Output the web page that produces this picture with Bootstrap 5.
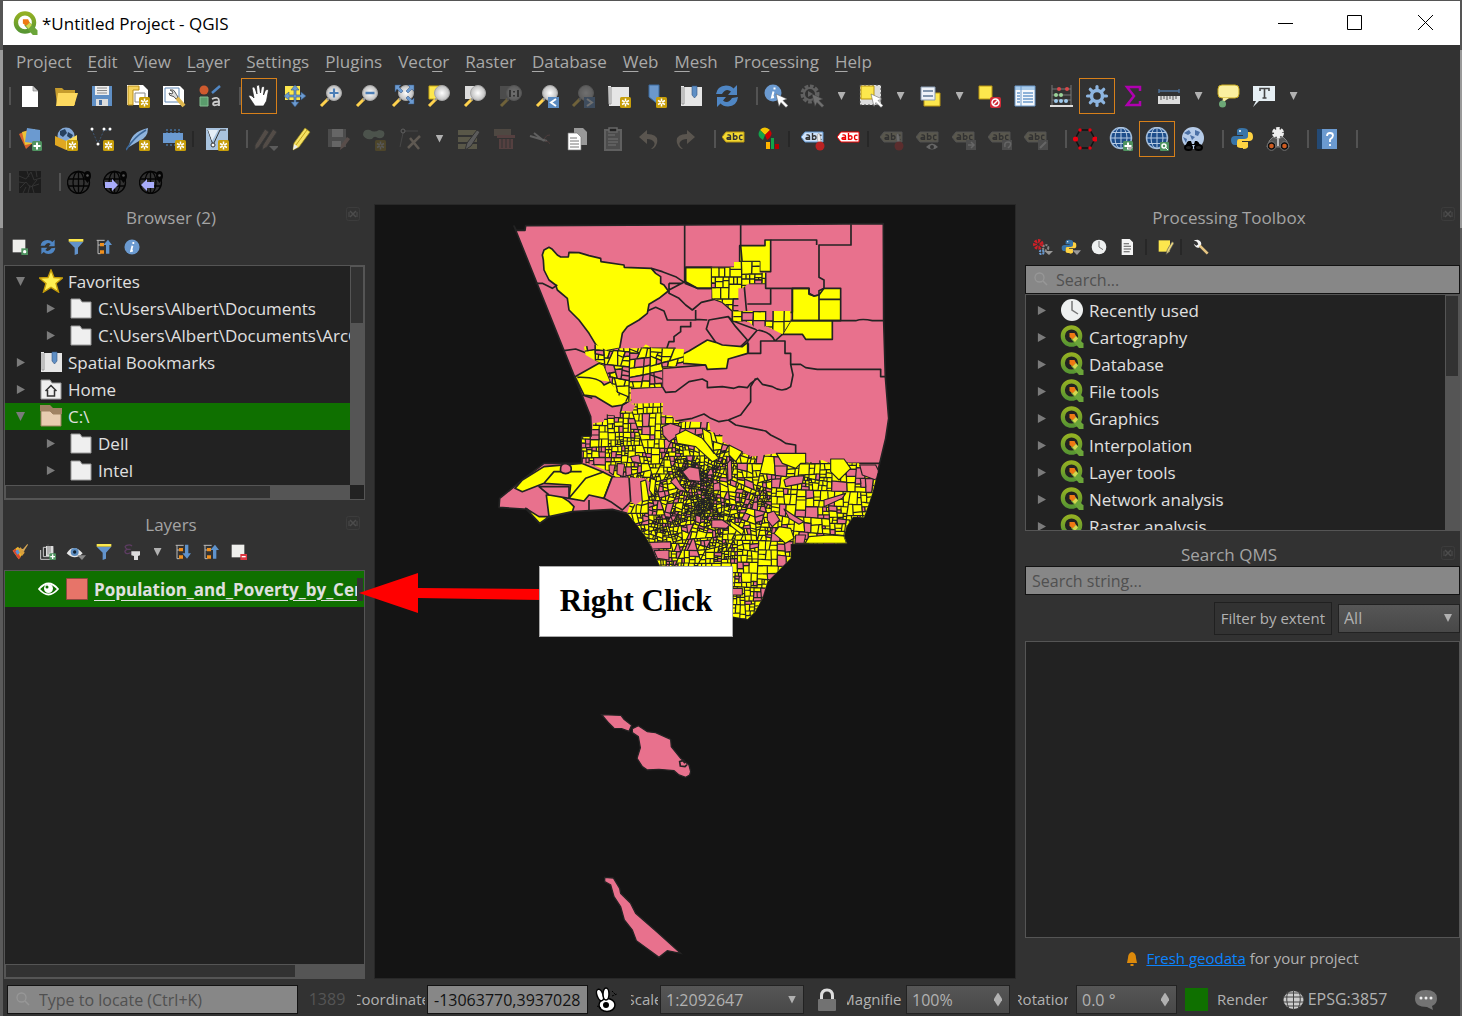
<!DOCTYPE html>
<html lang="en">
<head>
<meta charset="utf-8">
<meta name="viewport" content="width=device-width, initial-scale=1">
<title>*Untitled Project - QGIS</title>
<link href="https://cdn.jsdelivr.net/npm/bootstrap@5.3.0/dist/css/bootstrap.min.css" rel="stylesheet">
<style>
body{background:linear-gradient(#555 50px,#9a9a9a 50px,#9a9a9a 228px,#5a5a5a 228px);font-family:"Open Sans","Noto Sans",sans-serif;font-size:17px;line-height:27px;color:#b1b1b1;padding:1px 2px 0 3px}
.app{background:#323232;height:calc(100vh - 1px);min-height:700px}
.titlebar{background:#fff;color:#000;height:44px;padding-left:10px}
.titlebar .btn{width:70px;height:44px;padding:0;border:0;border-radius:0}
.menubar{height:32px;padding-left:5px;margin-bottom:2px}
.menubar a{color:#a9a9a9;padding:0 8px;text-decoration:none;white-space:nowrap}
.menubar u{text-underline-offset:3px;text-decoration-thickness:1px}
.tools{height:43px;padding-left:9px}
.tools.first{height:34px}
.tb{width:36px;height:36px;padding:0;border:1px solid transparent;border-radius:0;flex:none;display:flex;align-items:center;justify-content:center}
.tb:disabled{border-color:transparent;opacity:.3}
.tb.on{border-color:#d7801a}
.tb svg{width:24px;height:24px}
.grip{width:13px;flex:none;height:18px;border-right:2px solid #535353}
.tools>.grip:first-child{width:2px;margin-left:-3px;margin-right:1px}
.sepv{width:7px;height:16px;flex:none;border-left:2px solid #272727}
.drop{width:23px;height:24px;padding:0;border:0;flex:none;display:flex;align-items:center;justify-content:center}
.drop::before,.pick::after{content:"";width:8px;height:8px;background:#b1b1b1;clip-path:polygon(0 0,100% 0,50% 100%)}
.work{margin-top:1px;min-height:0}
.dock-l{width:371px;padding:0 9px 0 1px;flex:none}
.dock-r{width:444px;padding:0 0 0 9px;flex:none}
.dock-title{height:31px;color:#a4a4a4;flex:none}
.dock-title.tall{height:32px}
.shut{width:27px;border:0;padding:3px 0 6px 8px;line-height:1}
.mini{height:24px;margin-bottom:6px;padding-left:2px;flex:none}
.mini .btn{width:28px;height:24px;padding:0;border:0;display:flex;align-items:center;justify-content:center}
.mini svg{width:16px;height:16px}
.mini .wide,.mini .wide svg{width:20px}
.well{background:#222;border:1px solid #555;overflow:hidden}
.tree li{height:27px;display:flex;align-items:center;white-space:nowrap;color:#e0e0e0;padding-left:11px}
.tree li.sub{padding-left:41px}
.tree li svg.ic{width:24px;height:24px;flex:none;margin:0 5px 2px 14px}
.tree .tw{width:9px;height:9px;flex:none;background:#7b7b7b;clip-path:polygon(10% 0,100% 50%,10% 100%)}
.tree .tw.open{clip-path:polygon(0 0,100% 0,50% 100%)}
.sel{background:#0f7000}
.vbar,.hbar{background:#555;flex:none;padding:1px}
.vbar{width:14px}.hbar{height:14px}
.knob{background:#323232}
.field{background:#878787;border:1px solid #121212;border-radius:0;color:#121212;height:29px;font-size:16px;line-height:20px;padding:0 6px;outline:0;min-width:0}
.field::placeholder{color:#505050;opacity:1}
.glass{position:absolute;left:9px;top:7px;width:14px;height:14px}
.pick{position:relative;display:flex;align-items:center;background:linear-gradient(#565656,#484848);border:1px solid #222;height:29px}
.pick select,.pick input{appearance:none;background:transparent;border:0;color:#b1b1b1;font-size:16px;line-height:20px;width:100%;padding:0 5px;outline:0}
.pick::after{position:absolute;right:7px}
.pick.spin::after{clip-path:polygon(50% 0,100% 44%,100% 56%,50% 100%,0 56%,0 44%);height:14px}
.extent{border:1px solid #202020;border-radius:0;color:#b1b1b1;font-size:15px;height:33px;padding:0 6px;line-height:20px}
.note a{color:#0a84ff}
.note,.status label{font-size:15px}
.status{height:37px;padding:4px 0 0 4px;white-space:nowrap;font-size:16px}
.clip{display:flex;justify-content:center;overflow:hidden;flex:none}
.map{background:#141414;border:1px solid #282828;overflow:hidden;min-width:0}
.callout-box{position:absolute;left:536px;top:362px;width:194px;height:71px;background:#fff;border:1px solid #aaa;color:#000;font:bold 31px/68px "Liberation Serif",serif;text-align:center}
.callout-arrow{position:absolute;left:356px;top:368px;width:182px;height:42px}
.lname{font-weight:700;text-decoration:underline;text-underline-offset:4px;color:#e0e0e0;white-space:nowrap;overflow:hidden}
.lbar{width:6px;height:23px;flex:none;margin-right:1px}
.tick{appearance:none;width:23px;height:23px;background:#0f7000;margin:0}
svg{display:block}
</style>
</head>
<body>
<svg width="0" height="0" class="position-absolute" aria-hidden="true"><defs>
<linearGradient id="qg" x2="0" y2="1"><stop stop-color="#93b023"/><stop offset="1" stop-color="#589632"/></linearGradient>
<radialGradient id="lens"><stop stop-color="#fff"/><stop offset="1" stop-color="#bdbdbd"/></radialGradient>
<symbol id="q" viewBox="0 0 24 24"><circle cx="11.500" cy="11" r="8.700" fill="none" stroke="url(#qg)" stroke-width="4.200"/><path d="M12 11l3-1 8.500 8.500V23H19l-8-9z" fill="#6ba539"/><path d="M9.500 8h5l1.500 3-3 3.500-3.500-2.500z" fill="#ee7913"/><path d="M12.500 14.500l3.500-3.500 2 2.500-3 3.500z" fill="#d3d84f"/></symbol>
<symbol id="new" viewBox="0 0 24 24"><rect x="13" y="13" width="11" height="11" rx="1.500" fill="#c79e0a"/><path d="M18.500 14.500v8M15 16.500l7 4M22 16.500l-7 4" stroke="#fff" stroke-width="1.500"/><circle cx="18.500" cy="18.500" r="1" fill="#c79e0a"/></symbol>
<symbol id="plus" viewBox="0 0 24 24"><rect x="14" y="14" width="10" height="10" rx="1.500" fill="#4f9360"/><path d="M19 15.500v7M15.500 19h7" stroke="#fff" stroke-width="2"/></symbol>
<symbol id="cur" viewBox="0 0 24 24"><path d="M12 10l11 5-4 1.500 5 5-2 2-5-5-2 4z" fill="#fff" stroke="#555" stroke-width=".5"/></symbol>
<symbol id="doc" viewBox="0 0 24 24"><path d="M4 2h11l5 5v16H4z" fill="#fff"/><path d="M15 2l5 5h-5z" fill="#c8c8c8" stroke="#777" stroke-width=".6"/></symbol>
<symbol id="open" viewBox="0 0 24 24"><path d="M1 4h7l2 2h11v15H3z" fill="#c69c2d"/><path d="M4 9h20l-4 13H2z" fill="#fdd95f"/></symbol>
<symbol id="save" viewBox="0 0 24 24"><path d="M2 2h20v20H2z" fill="#5f8fc5"/><path d="M5 2h14v9H5z" fill="#eee"/><path d="M7 4h10M7 6.500h10M7 9h10" stroke="#888"/><path d="M6 15h12v7H6z" fill="#ddd"/><path d="M9 16h3v5H9z" fill="#446b9c"/></symbol>
<symbol id="lay" viewBox="0 0 24 24"><path d="M1 1h16l5 5v15H1z" fill="#fff"/><path d="M2 2h11v4H7v15H2z" fill="#f3d15c" stroke="#ba8e14"/><path d="M9 9h10v9H9z" fill="none" stroke="#888"/><use href="#new"/></symbol>
<symbol id="mgr" viewBox="0 0 24 24"><path d="M1 2h17l4 4v15H1z" fill="#fff"/><path d="M3 4h14v14H3z" fill="none" stroke="#5f87b5"/><path d="M8 6q4-1 5 2 1 2 3 5l-2 2q-2-3-4-3-3 0-3-3l3 1 1-2z" fill="#ddd" stroke="#555"/><path d="M15 14l7 8" stroke="#dfb74e" stroke-width="4"/></symbol>
<symbol id="sty" viewBox="0 0 24 24"><circle cx="6" cy="6" r="4.500" fill="#ce5a2e"/><path d="M14 9l8-7" stroke="#5187c4" stroke-width="2.500"/><path d="M2 13h8v9H2z" fill="#5a9c6c" stroke="#83bd91"/><path d="M14 15q7-3 7 2v5M21 17.500q-6 0-6 2.500t6 0" fill="none" stroke="#ccc" stroke-width="1.800"/></symbol>
<symbol id="hand" viewBox="0 0 24 24"><path d="M8 22l-6-9q-1-3 3-1l2 2L5 4q1-2 3 0l2 6-.500-8q2-2 3 0l1 7 1-6q2-1 3 0l-1 8 2-5q2-1 3 0l-2 11-3 5z" fill="#fff" stroke="#222" stroke-width=".7"/></symbol>
<symbol id="pan" viewBox="0 0 24 24"><path d="M2 2h15v14H2z" fill="#fde74d"/><path d="M12 1l4 5h-3v5h5V8l5 4-5 4v-3h-5v5h3l-4 5-4-5h3v-5H6v3l-5-4 5-4v3h5V6H8z" fill="#6b9ad0" stroke="#345580" stroke-width=".6"/></symbol>
<symbol id="mag" viewBox="0 0 24 24"><path d="M2 22l7-7" stroke="#ffd24d" stroke-width="3"/><path d="M8 16l3-3" stroke="#999" stroke-width="2"/><circle cx="15" cy="9" r="7.500" fill="url(#lens)" stroke="#a5a5a5"/></symbol>
<symbol id="zin" viewBox="0 0 24 24"><use href="#mag"/><path d="M15 4.500v9M10.500 9h9" stroke="#4c7eb6" stroke-width="2.200"/></symbol>
<symbol id="zout" viewBox="0 0 24 24"><use href="#mag"/><path d="M10.500 9h9" stroke="#4c7eb6" stroke-width="2.500"/></symbol>
<symbol id="zfull" viewBox="0 0 24 24"><use href="#mag"/><path d="M4 1h6L8 3l4 4-2 2-4-4-2 3zM23 1v6l-2-2-4 4-2-2 4-4-2-2zM23 20h-6l2-2-4-4 2-2 4 4 2-2z" fill="#6b9ad0" stroke="#345580" stroke-width=".5"/></symbol>
<symbol id="zsel" viewBox="0 0 24 24"><path d="M2 2h12v13H2z" fill="#fde74d" stroke="#c9a816"/><use href="#mag"/></symbol>
<symbol id="zlay" viewBox="0 0 24 24"><path d="M2 2h12v13H2z" fill="#ddd"/><use href="#mag"/></symbol>
<symbol id="z11" viewBox="0 0 24 24"><path d="M1 2h14v13H1z" fill="#888"/><use href="#mag"/><path d="M11 6v7M15 7v1.500M15 11v1.500M19 6v7" stroke="#111" stroke-width="1.600"/></symbol>
<symbol id="zprev" viewBox="0 0 24 24"><use href="#mag"/><path d="M13 13h11v11H13z" fill="#5a8ac0"/><path d="M21 15l-5 3.500 5 3.500" fill="none" stroke="#fff" stroke-width="2"/></symbol>
<symbol id="znext" viewBox="0 0 24 24"><use href="#mag"/><path d="M13 13h11v11H13z" fill="#5a8ac0"/><path d="M16 15l5 3.500-5 3.500" fill="none" stroke="#fff" stroke-width="2"/></symbol>
<symbol id="mapv" viewBox="0 0 24 24"><path d="M1 2h3v1h18v19H2z" fill="#e6e6e6"/><path d="M4 3v17H2V3" fill="none" stroke="#999"/><use href="#new"/></symbol>
<symbol id="bkn" viewBox="0 0 24 24"><path d="M6 1h10v20l-5-4-5-4z" fill="#6b98cc" stroke="#3d6b9e"/><use href="#new"/></symbol>
<symbol id="bks" viewBox="0 0 24 24"><path d="M2 2h3v1h18v19H2z" fill="#e6e6e6"/><path d="M5 3v17H3V3" fill="none" stroke="#999"/><path d="M13 2h5v9l-2.500 3-2.500-3z" fill="#5f8fc5" stroke="#345580" stroke-width=".6"/></symbol>
<symbol id="ref" viewBox="0 0 24 24"><path d="M1 10Q2 2 11 1.500q5 0 7.500 3L22 1v10h-9l3-3.500q-5-4-9 2.500zM23 13q-1 9-10 9.500-5 0-7.500-3L2 23V13h9l-3 3.500q5 4 9-2.500z" fill="#4f86c4"/></symbol>
<symbol id="inf" viewBox="0 0 24 24"><circle cx="9" cy="9" r="8.500" fill="#6b9ad0"/><path d="M10.500 3.500v2M9.500 7.500l-1.500 6 2-.500" stroke="#fff" stroke-width="2" fill="none"/></symbol>
<symbol id="idn" viewBox="0 0 24 24"><use href="#inf"/><use href="#cur"/></symbol>
<symbol id="gear" viewBox="0 0 24 24"><g stroke="#8db5e0" stroke-width="3.200" stroke-linecap="round"><path d="M12 2.500v19M2.500 12h19M5.300 5.300l13.400 13.400M18.700 5.300L5.300 18.700"/></g><circle cx="12" cy="12" r="5.500" fill="#323232" stroke="#8db5e0" stroke-width="3.500"/><circle cx="12" cy="12" r="2.500" fill="#323232"/></symbol>
<symbol id="act" viewBox="0 0 24 24"><circle cx="10" cy="10" r="7.500" fill="none" stroke="#ccc" stroke-width="4" stroke-dasharray="3.500 1.500"/><circle cx="10" cy="10" r="6" fill="none" stroke="#ccc" stroke-width="2"/><path d="M8 7l5 3-5 3z" fill="#ccc"/><use href="#cur"/></symbol>
<symbol id="self" viewBox="0 0 24 24"><path d="M1 1h21v20H1z" fill="#ddd" stroke="#444" stroke-dasharray="2 2"/><path d="M2 2h13v13H2z" fill="#fde74d" stroke="#b99513"/><use href="#cur"/></symbol>
<symbol id="selv" viewBox="0 0 24 24"><path d="M6 9h16v13H6z" fill="#fde74d" stroke="#b99513"/><path d="M3 3h14v13H3z" fill="#eef2f8" stroke="#8a9db5"/><path d="M5 7h10M5 12h10" stroke="#8195ad" stroke-width="2"/></symbol>
<symbol id="dsel" viewBox="0 0 24 24"><path d="M2 2h13v13H2z" fill="#fde74d" stroke="#b99513"/><rect x="13" y="13" width="11" height="11" rx="2" fill="#d02a35"/><circle cx="18.500" cy="18.500" r="3.500" stroke="#fff" fill="none" stroke-width="1.500"/><path d="M16 21l5-5" stroke="#fff" stroke-width="1.500"/></symbol>
<symbol id="tab" viewBox="0 0 24 24"><path d="M2 2h20v20H2z" fill="#f5f8fc"/><path d="M2 2h20v4H2z" fill="#a9cbea"/><path d="M2 2h20v20H2zM8 2v20" fill="none" stroke="#6c9acb"/><path d="M4 9h3M10 9h10M4 12h3M10 12h10M4 15h3M10 15h10M4 18h3M10 18h10" stroke="#6c9acb" stroke-width="1.300"/></symbol>
<symbol id="aba" viewBox="0 0 24 24"><path d="M3 1v21M22 1v21M3 5h19M3 11h19M3 16h19" stroke="#777" fill="none"/><path d="M1 22h23" stroke="#ddd" stroke-width="2"/><g fill="#d9484a"><circle cx="10" cy="5" r="2"/><circle cx="18" cy="5" r="2"/></g><g fill="#9cd49a"><circle cx="7" cy="11" r="2"/><circle cx="12" cy="11" r="2"/></g><g fill="#9ec9ec"><circle cx="7" cy="17" r="2"/><circle cx="12" cy="17" r="2"/><circle cx="17" cy="17" r="2"/></g></symbol>
<symbol id="sig" viewBox="0 0 24 24"><path d="M19 7V3H6l7 9-7 9h13v-4" fill="none" stroke="#b000b0" stroke-width="2.500"/></symbol>
<symbol id="rul" viewBox="0 0 24 24"><path d="M2 7h20M2 5v4M22 5v4" stroke="#4c6f96" stroke-width="1.500"/><path d="M1 12h22v8H1z" fill="#ddd"/><path d="M4 12v4M7 12v3M10 12v4M13 12v3M16 12v4M19 12v3" stroke="#555"/></symbol>
<symbol id="tip" viewBox="0 0 24 24"><rect x="2" y="1" width="21" height="13" rx="4" fill="#fbf0a0" stroke="#c6a91f"/><path d="M7 14l-1 5 7-5z" fill="#fbf0a0"/><circle cx="6.500" cy="20" r="3.500" fill="#6da877"/></symbol>
<symbol id="txt" viewBox="0 0 24 24"><path d="M1 2h22v15H7l-6 6 3-6H1z" fill="#e6eff4"/><path d="M8 7V4.500h9V7M12.500 5v9M10.500 14h4" fill="none" stroke="#444" stroke-width="1.600"/></symbol>
<symbol id="dsm" viewBox="0 0 24 24"><path d="M1 7l11-5 5 12-9 8z" fill="#d6612d"/><path d="M4 5l13-3v14l-10 2z" fill="#ecc435"/><path d="M9 1l13 2v14L7 15z" fill="#6b9ad0"/><use href="#plus"/></symbol>
<symbol id="gpk" viewBox="0 0 24 24"><circle cx="12" cy="9" r="8.500" fill="#83a8d6"/><path d="M6 4l5-2 2 4-4 4-3-2zM14 5l5 3-2 4-4-3z" fill="#27415e"/><path d="M1 9l11 5v9L1 18z" fill="#e0a722"/><path d="M12 14l11-6v10l-11 5z" fill="#f9dc5f"/><use href="#new"/></symbol>
<symbol id="shp" viewBox="0 0 24 24"><path d="M2 3l6 14 6-14h7" fill="none" stroke="#3d5673" stroke-dasharray="2 1.500"/><g fill="#fff"><circle cx="2" cy="2" r="1.500"/><circle cx="14" cy="2" r="1.500"/><circle cx="20" cy="2" r="1.500"/><circle cx="8" cy="17" r="1.500"/></g><use href="#new"/></symbol>
<symbol id="fea" viewBox="0 0 24 24"><path d="M3 20Q4 5 22 1q0 10-9 13z" fill="#8fb4de"/><path d="M0 23Q8 10 20 3" fill="none" stroke="#3b6799" stroke-width="1.500"/><use href="#new"/></symbol>
<symbol id="mem" viewBox="0 0 24 24"><path d="M5 2v18M9 2v18M13 2v18M17 2v18" stroke="#46719f" stroke-width="1.500" stroke-dasharray="2 1"/><path d="M1 6h20v10H1z" fill="#6b9ad0"/><use href="#new"/></symbol>
<symbol id="vir" viewBox="0 0 24 24"><path d="M1 1h22v22H1z" fill="#a9c3de"/><path d="M3 3l5 15 7-15h6" fill="none" stroke="#333"/><path d="M3 3l4 11 6-11z" fill="#e5eef7"/><circle cx="8" cy="18" r="2" fill="#fff" stroke="#333"/><use href="#new"/></symbol>
<symbol id="pen" viewBox="0 0 24 24"><path d="M4 16L15 1l5 4L9 20l-6 3z" fill="#f5e164" stroke="#9a8615" stroke-width=".7"/><path d="M6 18L17 3" stroke="#c2a41b"/><path d="M4 17l4 3-5 3z" fill="#eee"/></symbol>
<symbol id="pens" viewBox="0 0 24 24"><path d="M1 18L11 2l4 3L5 20l-4 3zM9 18L19 2l4 3-10 15-5 3z" fill="#a08a7a" stroke="#444"/><path d="M15 19h10l-5 5z" fill="#bbb"/></symbol>
<symbol id="sed" viewBox="0 0 24 24"><path d="M2 2h18v18H2z" fill="#888"/><path d="M6 2h11v8H6zM6 14h9v6H6z" fill="#ddd"/><path d="M14 23l1-5 6-8 3 2-6 8z" fill="#b08d84"/></symbol>
<symbol id="blob" viewBox="0 0 24 24"><path d="M1 8q0-6 7-5 4 3 9 0 7 0 5 6-3 4-8 1-2-1-4 2-7 1-9-4z" fill="#8aa08a"/><g opacity=".6"><use href="#new"/></g></symbol>
<symbol id="vtx" viewBox="0 0 24 24"><path d="M7 4h13" stroke="#777"/><path d="M5 6L2 20" stroke="#777"/><path d="M12 11l9 11M22 9L10 21" stroke="#c8b49c" fill="none" stroke-width="2.500"/><circle cx="5" cy="4" r="2" fill="none" stroke="#ccc"/></symbol>
<symbol id="mod" viewBox="0 0 24 24"><path d="M1 3h19v5H1zM1 10h19v5H1zM1 17h19v5H1z" fill="#b5ae7c"/><path d="M8 23l2-7L20 3l3 2-9 14z" fill="#bbb" stroke="#333"/></symbol>
<symbol id="del" viewBox="0 0 24 24"><path d="M1 2h17v7H1z" fill="#8f7b68"/><path d="M4 8h18v3H4zM6 12h14v10H6z" fill="#a56060"/><path d="M9 12v9M13 12v9M17 12v9" stroke="#333"/></symbol>
<symbol id="cut" viewBox="0 0 24 24"><path d="M1 9l17 5M5 6l10 8" stroke="#ccc" stroke-width="2"/><path d="M15 12q3-5 6-4M16 14q4 0 5 3" fill="none" stroke="#855"/></symbol>
<symbol id="cpy" viewBox="0 0 24 24"><path d="M9 1h9l4 4v13H9z" fill="#999"/><path d="M3 6h9l4 4v13H3z" fill="#fff" stroke="#777" stroke-width=".7"/><path d="M5 11h7M5 14h9M5 17h9M5 20h9" stroke="#777"/></symbol>
<symbol id="pst" viewBox="0 0 24 24"><path d="M4 3h16v20H4z" fill="#888" stroke="#ccc" stroke-width="2"/><path d="M8 1h8v4H8zM7 8h7M7 12h10M7 15h10M7 18h8" stroke="#ddd" stroke-width="1.500"/></symbol>
<symbol id="und" viewBox="0 0 24 24"><path d="M10 3v4q12 0 10 9-2 6-6 6 5-4 3-7-2-3-7-3v5L2 10z" fill="#b7a892"/></symbol>
<symbol id="tag" viewBox="0 0 24 24"><path d="M0 10l4-5h18v10H4z" fill="var(--a,#f3d931)" stroke="var(--b,#b99513)"/><g fill="none" stroke="var(--c,#333)" stroke-width="1.400"><path d="M5.500 8q3-.500 3 1.500v3.500M8.500 10.300q-3.500 0-3.500 1.200t3.500.500M11.500 6v7M11.500 9.300q3.500-1.500 3.500 1.200t-3.500 1.500M20.500 8.500q-3-1.200-3 1.900t3 1.900"/></g></symbol>
<symbol id="dia" viewBox="0 0 24 24"><path d="M7 8L2 3q5-5 10 0z" fill="#f4c400"/><path d="M7 8L2 3q-4 6 3 10z" fill="#12a34a"/><path d="M7 8l5-5q4 5-3 10z" fill="#d00000"/><path d="M8 15h4v7H8z" fill="#ffb300"/><path d="M13 11h3v11h-3z" fill="#12a34a"/><path d="M17 17h4v5h-4z" fill="#b00000"/></symbol>
<symbol id="pin" viewBox="0 0 24 24"><path d="M17 15q-2-8 1-9 2 3 2 10z" fill="#eee" stroke="#888" stroke-width=".5"/><circle cx="19" cy="19" r="4.500" fill="#b92222"/></symbol>
<symbol id="eyeb" viewBox="0 0 24 24"><path d="M10 20q6-7 12 0-6 5-12 0z" fill="#ddd"/><circle cx="16" cy="20" r="2" fill="#333"/></symbol>
<symbol id="sqb" viewBox="0 0 24 24"><path d="M14 13h10v10H14z" fill="#888"/><path d="M16 18h6M19 15l3 3-3 3" stroke="#ddd" fill="none" stroke-width="1.500"/></symbol>
<symbol id="rotb" viewBox="0 0 24 24"><path d="M14 13h10v10H14z" fill="#888"/><path d="M17 20q-1-5 3-5t2 4l-2 2" stroke="#ddd" fill="none" stroke-width="1.500"/></symbol>
<symbol id="edb" viewBox="0 0 24 24"><path d="M14 13h10v10H14z" fill="#888"/><path d="M16 21l6-6" stroke="#ddd" fill="none" stroke-width="2"/></symbol>
<symbol id="hex" viewBox="0 0 24 24"><path d="M7 3h10l5 9-5 9H7l-5-9z" fill="none" stroke="#111" stroke-width="1.500"/><g fill="#e80010"><circle cx="7" cy="3" r="1.700"/><circle cx="17" cy="3" r="1.700"/><circle cx="22" cy="12" r="2.600"/><circle cx="17" cy="21" r="1.700"/><circle cx="7" cy="21" r="1.700"/><circle cx="2.500" cy="12" r="2.600"/></g></symbol>
<symbol id="glb" viewBox="0 0 24 24"><circle cx="12" cy="11" r="10.500" fill="#1d4d8a" stroke="#9cb8d8" stroke-width="1.500"/><path d="M1 11h22M3 5.500h18M3 16.500h18M12 1v20" stroke="#b4c9e2"/><ellipse cx="12" cy="11" rx="6" ry="10.500" fill="none" stroke="#b4c9e2"/></symbol>
<symbol id="ga" viewBox="0 0 24 24"><use href="#glb"/><use href="#plus"/><path d="M18 20h6l-3 4z" fill="#aaa"/></symbol>
<symbol id="gs" viewBox="0 0 24 24"><use href="#glb"/><rect x="15" y="15" width="9" height="9" rx="1" fill="#4f9360"/><circle cx="19" cy="19" r="2" fill="none" stroke="#fff" stroke-width="1.500"/><path d="M21 21l2 2" stroke="#fff"/></symbol>
<symbol id="gb" viewBox="0 0 24 24"><circle cx="12" cy="11" r="11" fill="#b5cbe8"/><path d="M3 6l5-3 2 3-3 2zM14 3l5 2-2 4-3-1zM2 10l4 2-1 4zM9 8l5 2-3 3z" fill="#4c71a6"/><path d="M5 18q1-4 3-4h2l1 3h2l1-3h2q2 1 3 4z" fill="#000"/><ellipse cx="7.500" cy="20.500" rx="3.500" ry="2.500" stroke="#000" stroke-width="2" fill="#222"/><ellipse cx="17.500" cy="20.500" rx="3.500" ry="2.500" stroke="#000" stroke-width="2" fill="#222"/></symbol>
<symbol id="py" viewBox="0 0 24 24"><path d="M12 1q-6 0-5 4v3h6v1H5q-4 0-4 4 0 5 4 5h2v-3q0-3 4-3h5q2 0 2-3V4q0-3-6-3z" fill="#3874a8"/><path d="M13 22q6 0 5-4v-3h-6v-1h7q4 0 4-4 0-5-4-5h-1v4q0 3-4 3H9q-2 0-2 3v4q0 2 6 2z" fill="#ffd342"/><circle cx="10" cy="4" r="1" fill="#fff"/></symbol>
<symbol id="bino" viewBox="0 0 24 24"><circle cx="12" cy="6" r="4" fill="#eee" stroke="#eee" stroke-width="4" stroke-dasharray="3 1.200"/><path d="M1 20q2-8 6-10l5 2 5-2q4 2 6 10z" fill="#555" stroke="#999" stroke-width=".7"/><path d="M11 11h2v8h-2z" fill="#bbb"/><circle cx="5.500" cy="19" r="4.300" fill="#111" stroke="#777"/><circle cx="18.500" cy="19" r="4.300" fill="#111" stroke="#777"/><circle cx="5.500" cy="19" r="2.300" fill="#cf5c21"/><circle cx="18.500" cy="19" r="2.300" fill="#cf5c21"/></symbol>
<symbol id="hlp" viewBox="0 0 24 24"><path d="M2 2h20v20H2z" fill="#6b9ad0"/><path d="M2 2h5v20H2z" fill="#244a75"/><path d="M12 9q0-3 3-3t3 2.500q0 2-3 4V15M15 17v2" fill="none" stroke="#fff" stroke-width="1.800"/></symbol>
<symbol id="osm" viewBox="0 0 24 24"><path d="M1 1h22v22H1z" fill="#1c1c1c"/><path d="M1 6l7 3 5-7 3 8 7-2M2 18l6-6 4 5 9-3M5 23l3-6M16 23l-2-7 5-6M1 12l6 1M9 1l2 6M18 1l1 6M10 23l2-8" fill="none" stroke="#333"/></symbol>
<symbol id="bg" viewBox="0 0 24 24"><g fill="none" stroke="#050505" stroke-width="1.300"><circle cx="11.500" cy="12.500" r="11"/><ellipse cx="11.500" cy="12.500" rx="5.500" ry="11"/><path d="M11.500 2v22M1 9h21M1 16h21"/></g><path d="M17 6q0-5 3.500-5T24 6q0 3-3.500 7Q17 9 17 6z" fill="#050505"/><circle cx="20.500" cy="5.500" r="1.300" fill="#555"/></symbol>
<symbol id="bgr" viewBox="0 0 24 24"><use href="#bg"/><path d="M2 12h7V9l6 6-6 6v-3H2z" fill="#a9adfb"/></symbol>
<symbol id="bgl" viewBox="0 0 24 24"><use href="#bg"/><path d="M15 12H8V9l-6 6 6 6v-3h7z" fill="#a9adfb"/></symbol>
<symbol id="star" viewBox="0 0 24 24"><path d="M12 1l3 7.500 8.500.500-6.500 5.500 2.500 8.500-7.500-4.700L4.500 23 7 14.500.500 9 9 8.500z" fill="#ffef52" stroke="#c49b0a" stroke-width="1.400"/></symbol>
<symbol id="fol" viewBox="0 0 24 24"><path d="M2 3h9l2 3h9v16H2z" fill="#efefef" stroke="#999"/></symbol>
<symbol id="hom" viewBox="0 0 24 24"><use href="#fol"/><path d="M6.500 14l5.500-5.500 5.500 5.500M8.500 13v6h7v-6" fill="none" stroke="#333" stroke-width="1.500"/></symbol>
<symbol id="drv" viewBox="0 0 24 24"><path d="M1 1h10l3 3h9v6h-9l-3-3H1z" fill="#a08263"/><path d="M2 7h9l3 3h8v12H2z" fill="#e7ccb0" stroke="#a08263"/></symbol>
<symbol id="clk" viewBox="0 0 24 24"><circle cx="12" cy="12" r="11" fill="#eef0f0"/><path d="M12 3v9l6 4" fill="none" stroke="#777" stroke-width="1.500"/></symbol>
<symbol id="fil" viewBox="0 0 24 24"><path d="M1 4h22l-8 9v9l-5 2V13z" fill="#6293cc"/><path d="M1 0h22v4H1z" fill="#fbe74d"/></symbol>
<symbol id="colp" viewBox="0 0 24 24"><path d="M1 2h12M3 2v20h4M3 9h4" stroke="#bbb" stroke-width="1.500" fill="none"/><path d="M6 6h6v5H6zM6 17h6v5H6z" fill="#f0901e"/><path d="M15 22V9h-4l7-8 6 8h-4v13z" fill="#5f93cc"/></symbol>
<symbol id="expd" viewBox="0 0 24 24"><path d="M1 2h12M3 2v20h4M3 9h4" stroke="#bbb" stroke-width="1.500" fill="none"/><path d="M6 6h6v5H6zM6 17h6v5H6z" fill="#f0901e"/><path d="M15 1v13h-4l7 8 6-8h-4V1z" fill="#5f93cc"/></symbol>
<symbol id="sqa" viewBox="0 0 24 24"><path d="M1 1h19v19H1z" fill="#efefec"/><path d="M14 14h10v10H14z" fill="#4f9360"/><circle cx="19" cy="19" r="2.500" fill="#fff"/></symbol>
<symbol id="sqm" viewBox="0 0 24 24"><path d="M1 1h19v19H1z" fill="#efefec"/><path d="M14 15h10v9H14z" fill="#dc3540"/><path d="M16 19h6" stroke="#fff" stroke-width="2"/></symbol>
<symbol id="brs" viewBox="0 0 24 24"><path d="M1 10l8-6 8 10-7 9z" fill="#efb52b"/><path d="M1 10l4-3 8 13-3 3z" fill="#d9472e"/><path d="M5 11l4-3 3 5-4 3z" fill="#5a93d6"/><path d="M9 8l4-3 6 8-4 5z" fill="#d9a03c"/><path d="M14 8l3-1 6-7 1 1-5 8-1 3z" fill="#d5a655"/></symbol>
<symbol id="grp" viewBox="0 0 24 24"><path d="M1 9v14h14M5 5v14h14V5z" fill="none" stroke="#ccc" stroke-width="1.500"/><path d="M9 3h11v15H9z" fill="#ddd"/><path d="M12 0v16M15 3v10" stroke="#555"/><use href="#plus"/></symbol>
<symbol id="vis" viewBox="0 0 30 24"><path d="M1 14q10-16 24 0-12 12-24 0z" fill="#e6e6e6"/><circle cx="13" cy="12" r="6" fill="#5c8cbf"/><circle cx="13" cy="12" r="2.500" fill="#123"/><path d="M17 17h13l-6 7z" fill="#888"/></symbol>
<symbol id="eps" viewBox="0 0 24 24"><path d="M12 3Q9 0 4 2t1 6q-5 2-3 5t8 0M5 8h5" fill="none" stroke="#5d3c62" stroke-width="2"/><path d="M11 11h13v6l-3 1v6h-6v-6l-4-1z" fill="#ddd"/></symbol>
<symbol id="gr3" viewBox="0 0 30 24"><g fill="none" stroke-dasharray="3 1.500"><circle cx="8" cy="8" r="5" stroke="#cf1f27" stroke-width="6"/><circle cx="19" cy="13" r="4" stroke="#888" stroke-width="3"/><circle cx="13" cy="20" r="3" stroke="#6b9ad0" stroke-width="3"/></g><path d="M17 18h13l-6 6z" fill="#999"/></symbol>
<symbol id="pyd" viewBox="0 0 30 24"><use href="#py" width="24" height="24"/><path d="M17 17h13l-6 7z" fill="#999"/></symbol>
<symbol id="rep" viewBox="0 0 24 24"><path d="M4 0h12l5 5v19H4z" fill="#f4f4f4"/><path d="M7 7h8M7 11h11M7 15h11M7 19h9" stroke="#555" stroke-width="1.600"/></symbol>
<symbol id="nte" viewBox="0 0 24 24"><path d="M1 2h17v17H1z" fill="#fde74d"/><path d="M12 23l2-7 7-12 3 2-8 14z" fill="#e9d67e" stroke="#555"/></symbol>
<symbol id="wr" viewBox="0 0 24 24"><path d="M1 2l5 2 2 4-3 2-4-3q3 7 8 6l3-3q2-7-5-9z" fill="#f4f4f4"/><path d="M10 10l12 12" stroke="#e6c582" stroke-width="4"/></symbol>
<symbol id="x" viewBox="0 0 14 14"><rect x=".500" y=".500" width="13" height="13" rx="2" fill="none" stroke="#3c3c3c"/><path d="M4 4l6 6M10 4l-6 6" stroke="#4c4c4c" stroke-width="1.500"/><path d="M3 5v5M11 5v5" stroke="#4c4c4c"/></symbol>
<symbol id="sr" viewBox="0 0 14 14"><circle cx="5.500" cy="5.500" r="4.500" fill="none" stroke="#979797" stroke-width="1.300"/><path d="M9 9l4 4" stroke="#979797" stroke-width="1.500"/></symbol>
</defs></svg>

<div class="app d-flex flex-column">
<header class="titlebar d-flex align-items-center">
  <svg width="25" height="25" class="me-1"><use href="#q"/></svg><span class="flex-grow-1">*Untitled Project - QGIS</span>
  <button class="btn" aria-label="Minimize"><svg width="70" height="44" stroke="#000"><path d="M28 22.500h15"/></svg></button>
  <button class="btn" aria-label="Maximize"><svg width="70" height="44" stroke="#000" fill="none"><path d="M27.500 14.500h14v14h-14z"/></svg></button>
  <button class="btn" aria-label="Close"><svg width="70" height="44" stroke="#000"><path d="M28 14l15 15M43 14L28 29"/></svg></button>
</header>
<nav class="menubar d-flex align-items-center">
<a href="#">Project</a><a href="#"><u>E</u>dit</a><a href="#"><u>V</u>iew</a><a href="#"><u>L</u>ayer</a><a href="#"><u>S</u>ettings</a><a href="#"><u>P</u>lugins</a><a href="#">Vect<u>o</u>r</a><a href="#"><u>R</u>aster</a><a href="#"><u>D</u>atabase</a><a href="#"><u>W</u>eb</a><a href="#"><u>M</u>esh</a><a href="#">Pro<u>c</u>essing</a><a href="#"><u>H</u>elp</a>
</nav>
<div class="tools first d-flex align-items-center" data-tools="| doc open save lay mgr sty | hand* pan zin zout zfull zsel zlay z11- zprev znext- mapv bkn bks ref | idn act- v self v selv v dsel tab aba gear* sig rul v tip txt v"></div>
<div class="tools d-flex align-items-center mt-1" data-tools="| dsm gpk shp fea mem : vir | pens- pen sed- blob- vtx- v mod- del- cut- cpy pst- und- redo- | tag dia : tpin tred : t1- t2- t3- t4- t5- | hex ga gs* gb | py bino | hlp |"></div>
<div class="tools d-flex align-items-center" data-tools="| osm | bg bgr bgl"></div>

<main class="work d-flex flex-grow-1 position-relative">
<aside class="dock-l d-flex flex-column">
  <div class="dock-title d-flex align-items-start"><span class="flex-grow-1 text-center">Browser (2)</span><button class="btn shut" aria-label="Close Browser"><svg width="14" height="14"><use href="#x"/></svg></button></div>
  <div class="mini d-flex"><button class="btn" aria-label="Add"><svg><use href="#sqa"/></svg></button><button class="btn" aria-label="Refresh"><svg><use href="#ref"/></svg></button><button class="btn" aria-label="Filter"><svg><use href="#fil"/></svg></button><button class="btn" aria-label="Collapse"><svg><use href="#colp"/></svg></button><button class="btn" aria-label="Properties"><svg viewBox="0 0 18 18"><use href="#inf" width="24" height="24"/></svg></button></div>
  <div class="well d-flex flex-column flex-shrink-0" style="height:235px">
    <div class="d-flex flex-grow-1" style="min-height:0">
      <ul class="tree list-unstyled m-0 flex-grow-1 overflow-hidden" style="padding-top:2px">
        <li><i class="tw open"></i><svg class="ic"><use href="#star"/></svg>Favorites</li>
        <li class="sub"><i class="tw"></i><svg class="ic"><use href="#fol"/></svg>C:\Users\Albert\Documents</li>
        <li class="sub"><i class="tw"></i><svg class="ic"><use href="#fol"/></svg>C:\Users\Albert\Documents\ArcGIS</li>
        <li><i class="tw"></i><svg class="ic"><use href="#bks"/></svg>Spatial Bookmarks</li>
        <li><i class="tw"></i><svg class="ic"><use href="#hom"/></svg>Home</li>
        <li class="sel"><i class="tw open"></i><svg class="ic"><use href="#drv"/></svg>C:\</li>
        <li class="sub"><i class="tw"></i><svg class="ic"><use href="#fol"/></svg>Dell</li>
        <li class="sub"><i class="tw"></i><svg class="ic"><use href="#fol"/></svg>Intel</li>
      </ul>
      <div class="vbar"><div class="knob" style="height:56px"></div></div>
    </div>
    <div class="hbar" style="margin-right:14px"><div class="knob h-100" style="width:77%"></div></div>
  </div>
  <div class="dock-title tall d-flex align-items-center mt-2"><span class="flex-grow-1 text-center">Layers</span><button class="btn shut" aria-label="Close Layers"><svg width="14" height="14"><use href="#x"/></svg></button></div>
  <div class="mini d-flex"><button class="btn" aria-label="Styling"><svg><use href="#brs"/></svg></button><button class="btn" aria-label="Add group"><svg><use href="#grp"/></svg></button><button class="btn wide mx-1" aria-label="Themes"><svg><use href="#vis"/></svg></button><button class="btn" aria-label="Filter legend"><svg><use href="#fil"/></svg></button><button class="btn" aria-label="Filter by expression"><svg><use href="#eps"/></svg></button><button class="btn drop" style="width:23px" aria-label="More"></button><button class="btn" aria-label="Expand all"><svg><use href="#expd"/></svg></button><button class="btn" aria-label="Collapse all"><svg><use href="#colp"/></svg></button><button class="btn" aria-label="Remove"><svg><use href="#sqm"/></svg></button></div>
  <div class="well d-flex flex-column flex-grow-1">
    <div class="sel d-flex align-items-center flex-shrink-0" style="height:36px;padding-left:33px">
      <svg width="21" height="14" viewBox="0 0 21 14" class="flex-shrink-0"><path d="M1 7q9.500-11 19 0-9.500 11-19 0z" fill="none" stroke="#fff" stroke-width="1.800"/><circle cx="10.500" cy="6.500" r="4.500" fill="#fff"/><circle cx="9" cy="5" r="1.500" fill="#0f7000"/></svg>
      <svg width="22" height="22" class="flex-shrink-0 mx-2" style="margin-left:7px!important;margin-right:6px!important"><path d="M.500.500h21v21H.500z" fill="#e77469" stroke="#8a4a40"/></svg>
      <span class="lname flex-grow-1">Population_and_Poverty_by_Census</span><div class="knob lbar"></div>
    </div>
    <div class="flex-grow-1"></div>
    <div class="hbar"><div class="knob h-100" style="width:81%"></div></div>
  </div>
</aside>

<section class="map flex-grow-1" aria-label="Map canvas">
<svg width="640" height="772" viewBox="0 0 640 772" style="max-width:none">
<defs>
<clipPath id="land"><path id="landp" d="M75 63L82 76 108 76 110 62 585 60 1183 56 1184 347 1189 515 1199 640 1190 700 1172 775 1150 865 1125 937 1092 935 1072 965 1065 993 1073 1015 905 1017 905 1060 870 1095 835 1130 820 1180 798 1220 775 1243 735 1235 640 1200 560 1140 512 1082 490 1030 470 995 440 955 415 925 370 913 250 920 180 935 152 955 115 913 30 907 32 880 100 825 165 775 278 775 278 695 308 695 305 635 225 437Z"/></clipPath>
<clipPath id="city"><path d="M278 775V695H308L312 655 345 650 348 628 380 632 400 618 430 620 440 600 425 596 522 593 520 630 550 632 560 650 610 650 660 652 665 680 700 690 700 710 765 745 790 755 865 745 950 745 950 775 1000 765 1020 775 1030 762 1060 762 1080 775 1110 775 1120 800 1172 800V1260H500L512 1082 470 995 415 925 425 890 440 900 480 870 500 850 470 820 380 815 360 800 300 775Z"/></clipPath>
<clipPath id="clar"><path d="M285 425L320 418 355 438 392 430 460 430 470 418 490 430 585 432 582 480 520 490 520 545 425 548 425 590 400 590 365 530 345 480 325 470 290 450Z"/></clipPath>
<clipPath id="palm"><path d="M668 187H735V170H812V203H828V235H780L760 250H748V318H905V347L880 388 830 362 805 375 780 350 733 347V318L700 290 670 280Z"/></clipPath>
</defs>
<g transform="translate(114 0) scale(.33333)" stroke="#232323" stroke-width="5" stroke-linejoin="round" fill="none">
<use href="#landp" fill="#e8718d"/>
<g fill="#ff0">
<path d="M163 165L160 150 165 135 180 127 190 133 205 150 215 156H238L240 142 270 143 300 152 335 160 336 170 405 180 406 187 487 190 500 205 515 215V235L525 240 538 258 510 280 480 298 475 325 450 345 415 365 400 385 392 430 340 440 320 418 300 385 270 345 240 315 235 280 205 255 200 240 180 225 165 195Z"/>
<path d="M590 187H668V250H625L590 230ZM752 122H828V105H845V200H812V170H752ZM910 250H960V268L975 273 990 270V347H910ZM990 257L1005 250H1055V347H990ZM990 283H1055M905 347H1030V403H950L940 388H880ZM582 447L600 438 655 405 680 412 700 420 760 425 776 412V445L718 462 713 490 655 493 650 480 582 475Z"/>
<path d="M258 515L330 475 345 480 365 530 390 560 425 585 400 600 370 605 320 575 285 570ZM265 517Q330 515 345 540L365 530"/>
<path d="M78 850L100 825 165 785 278 775 340 800 370 815 345 880 300 870 285 888 240 880 245 840 165 835 100 860ZM172 870L210 870 240 890 255 905 250 920 180 935ZM110 910L150 935 180 935 152 955ZM165 835L195 800H278M240 880L290 820 345 800"/>
</g>
<path d="M215 800Q212 775 230 775 252 780 245 800 230 812 215 800ZM370 815L420 815 425 890 400 915 365 890 345 880ZM300 885V915M150 845L240 845 240 880 180 870Z" fill="#e8718d"/>
<path d="M587 60V230L540 255M587 235L625 250H670V283M755 60V122M1086 58V120H990V217L1005 225V250L990 270 975 273 960 265V250H830V203M755 122L765 235 775 345M845 105H983V120M590 187H735M487 190L520 200 560 215 590 235 625 250M540 235H580M540 235V265L570 280 590 300 610 315 637 292 675 283 700 292 730 318V345M620 315V345H535L525 318 500 307 475 318M780 235H830V250H845V297H775M830 250H910V322H830M1183 347H1150Q1120 340 1100 347H730L718 335 660 345 652 372 680 412M620 343L655 345M605 350V365H575V380L555 395V410H540L530 440M455 430H560M718 335L740 365 775 405 755 425M730 347L805 375 775 410M805 375Q845 380 858 408H815V445H778V415M830 362H860L880 388 858 408H888V445H905V478L912 510 905 545Q880 565 850 545L820 538 805 520 785 535 775 548 750 545 735 550 700 545 655 548V530L640 522 600 530 580 545 560 560 530 562 520 545V490L650 480M905 478H935L950 488 985 493H1175V515H1190M800 520L785 545V590L755 630 718 645 690 650 665 640 645 627 610 640 550 650M718 645L740 660 780 668 830 678 845 690 875 705 890 715 920 720V775M945 775H1172M140 235H160L190 250 205 240M225 437L260 432 300 447M280 570L310 580M425 585L400 600 388 650M425 550L520 545"/>
<g clip-path="url(#land)"><g id="tracts"></g>
<g stroke-width="3.500">
<path fill="#e8718d" d="M580 800L600 785 630 790 635 830 600 825ZM668 945L700 945 722 960 712 970 668 968ZM480 1012L545 1010V1030L490 1032ZM495 1037L540 1035V1065L505 1060ZM885 825L905 815 945 812 940 835 890 845ZM835 925L855 918 872 945 850 965 835 945ZM885 912L920 935 945 950 930 958 900 940ZM520 665L545 655 575 665 570 690 540 710 522 690ZM570 700L637 690V710L600 708ZM1005 885L1070 865 1060 880 1005 905ZM920 990H950L945 1015H918ZM425 755L450 750 455 775 430 770ZM545 830L560 815 575 840 595 860 570 855ZM1112 780L1160 780 1170 800 1160 825 1120 810ZM620 930l15 5v20l-15-5zM730 1150h30v20h-30zM360 780l18 0-5 30-12-8zM385 775l22 2-5 38-18-8zM715 775l12-14 2 60-12 8z"/>
<path fill="#ff0" d="M960 995L1020 990 1065 993 1073 1015H948ZM720 945L765 975 760 990 725 962ZM870 965L905 970 915 1000 890 1015 855 985ZM862 745H950V775H935L920 790 880 775ZM1025 762H1065L1085 790 1050 825 1025 800ZM560 690L590 675 640 700 690 760 670 770 620 725 565 715ZM640 670l25 15 10 60-30-40zM720 720l40 20-20 30-20-20zM455 830l15-5 10 60-20 5zM485 820l15 5-5 50-14-20z"/>
</g></g>
</g>
<g transform="translate(204 495) scale(.33333)" fill="#e8718d" stroke="#232323" stroke-width="4">
<path d="M68 44L126 46 135 58 158 76 150 94 128 86 105 85 90 70ZM160 86L178 77 205 95 230 98 275 118 277 140 305 175 330 195 335 215 332 225 320 232 300 225 285 212 240 208 205 210 190 200 174 175 184 143 178 110 160 98Z"/><path d="M316 180L302 185 304 198 318 200 324 194M312 182L318 190" fill="none" stroke-width="5"/>
<path d="M77 532L103 534 122 565 125 580 155 610 170 640 235 697 305 760 265 752 240 772 172 722 160 690 136 660 125 620 105 590 95 555 77 545Z"/></g>
</svg>
</section>

<aside class="dock-r d-flex flex-column">
  <div class="dock-title d-flex align-items-start"><span class="flex-grow-1 text-center">Processing Toolbox</span><button class="btn shut" aria-label="Close Toolbox"><svg width="14" height="14"><use href="#x"/></svg></button></div>
  <div class="mini d-flex align-items-center ps-2"><button class="btn wide me-2" aria-label="Models"><svg><use href="#gr3"/></svg></button><button class="btn wide me-1" aria-label="Scripts"><svg><use href="#pyd"/></svg></button><button class="btn" aria-label="History"><svg><use href="#clk"/></svg></button><button class="btn" aria-label="Results"><svg><use href="#rep"/></svg></button><span class="sepv ms-1"></span><button class="btn" aria-label="Edit in place"><svg><use href="#nte"/></svg></button><span class="sepv"></span><button class="btn" aria-label="Options"><svg><use href="#wr"/></svg></button></div>
  <div class="position-relative d-flex"><svg class="glass"><use href="#sr"/></svg><input class="field w-100" style="padding-left:30px" placeholder="Search..." aria-label="Search tools"></div>
  <div class="well d-flex flex-shrink-0" style="height:237px">
    <ul class="tree list-unstyled m-0 flex-grow-1 overflow-hidden" style="padding-top:2px" id="algs"></ul>
    <div class="vbar"><div class="knob" style="height:80px"></div></div>
  </div>
  <div class="dock-title d-flex align-items-center mt-1 pt-2"><span class="flex-grow-1 text-center">Search QMS</span><button class="btn shut" aria-label="Close QMS"><svg width="14" height="14"><use href="#x"/></svg></button></div>
  <input class="field flex-shrink-0" placeholder="Search string..." aria-label="Search string">
  <div class="d-flex justify-content-end align-items-center my-2 flex-shrink-0" style="height:30px;gap:6px"><button class="btn extent">Filter by extent</button><div class="pick" style="width:122px"><select aria-label="Status"><option>All</option></select></div></div>
  <div class="well flex-grow-1"></div>
  <div class="note d-flex align-items-center justify-content-center flex-shrink-0" style="height:41px"><svg width="12" height="14" class="me-2" viewBox="0 0 12 14"><path d="M6 0q4 1 4 6l1 5H1l1-5q0-5 4-6zM4.500 12h3v2h-3z" fill="#dd8a0b"/></svg><span><a href="#">Fresh geodata</a> for your project</span></div>
</aside>
<svg class="callout-arrow" viewBox="0 0 182 42"><path d="M0 21L59 1V16L182 17V28L59 26V41Z" fill="#f00"/></svg>
<div class="callout-box">Right Click</div>
</main>

<footer class="status d-flex align-items-center">
  <div class="position-relative d-flex" style="width:291px"><svg class="glass"><use href="#sr"/></svg><input class="field w-100" style="padding-left:31px" placeholder="Type to locate (Ctrl+K)" aria-label="Locate"></div>
  <span class="clip" style="width:58px;color:#555">1389</span>
  <label for="co" class="clip" style="width:68px;margin:0 2px 0 1px">Coordinate</label><input id="co" class="field" style="width:161px" value="-13063770,3937028">
  <svg width="36" height="26" viewBox="0 0 36 26"><g fill="#fff" stroke="#000" stroke-width="1.500"><ellipse cx="19" cy="18" rx="8" ry="6.500"/><ellipse cx="12" cy="8" rx="3" ry="6" transform="rotate(-20 12 8)"/><ellipse cx="18" cy="7" rx="3" ry="6"/></g><circle cx="18" cy="18" r="3" /><path d="M24 4l3 3M24 9l5-2M9 19l4 2" stroke="#000" stroke-dasharray="2 1"/></svg>
  <label for="sc" class="clip" style="width:27px;margin:0 2px 0 7px">Scale</label><div class="pick" style="width:144px"><select id="sc"><option>1:2092647</option></select></div>
  <svg width="20" height="24" viewBox="0 0 20 24" style="margin:0 16px 0 13px"><path d="M4.500 13V8q0-6 5.500-6t5.500 6v5" fill="none" stroke="#ddd" stroke-width="3"/><rect x="1" y="11" width="18" height="12" rx="1" fill="#727272"/></svg>
  <label for="mg" class="clip" style="width:55px;margin:0 4px 0 -6px">Magnifier</label><div class="pick spin" style="width:104px"><input id="mg" value="100%"></div>
  <label for="ro" class="clip" style="width:50px;margin:0 8px">Rotation</label><div class="pick spin" style="width:101px"><input id="ro" value="0.0 °"></div>
  <input type="checkbox" class="tick ms-2" id="rn" checked><label for="rn" style="margin:0 15px 0 9px">Render</label>
  <svg width="21" height="20" viewBox="0 0 21 20" class="me-1"><ellipse cx="10.500" cy="10" rx="10" ry="9" fill="#ccc"/><path d="M0 7h21M0 12h21M3 16h15M3 3h15M10.500 0v20M5 1q-3 9 1 18M16 1q3 9-1 18" stroke="#444" fill="none"/></svg>EPSG:3857
  <svg width="24" height="20" viewBox="0 0 24 20" style="margin-left:27px"><path d="M12 0Q23 0 23 8.500 23 14 18 16l1 4-6-3Q1 17 1 8.500T12 0z" fill="#737373"/><g fill="#eee"><circle cx="7" cy="8" r="1.500"/><circle cx="12" cy="8" r="1.500"/><circle cx="17" cy="8" r="1.500"/></g></svg>
</footer>
</div>
<script src="https://cdn.jsdelivr.net/npm/bootstrap@5.3.0/dist/js/bootstrap.bundle.min.js"></script>
<script>
// Toolbars: "|" grip, ":" separator, "v" drop-down arrow, "*" checked, "-" disabled
const u = id => `<use href="#${id}"/>`;
const red = 'style="--a:#fff;--b:#e00;--c:#e00"', blue = 'style="--a:#cfe3fa;--b:#5f93cc"', grey = 'style="--a:#b5ae8c;--b:#999"';
const combos = {
  redo: '<g transform="matrix(-1 0 0 1 24 0)">' + u('und') + '</g>',
  tpin: `<g ${blue}>${u('tag')}</g>` + u('pin'), tred: `<g ${red}>${u('tag')}</g>`,
  t1: `<g ${grey}>${u('tag')}</g>` + u('pin'), t2: `<g ${grey}>${u('tag')}</g>` + u('eyeb'),
  t3: `<g ${grey}>${u('tag')}</g>` + u('sqb'), t4: `<g ${grey}>${u('tag')}</g>` + u('rotb'), t5: `<g ${grey}>${u('tag')}</g>` + u('edb')
};
document.querySelectorAll('[data-tools]').forEach(bar => {
  bar.innerHTML = bar.dataset.tools.split(' ').map(t => {
    if (t === '|') return '<span class="grip"></span>';
    if (t === ':') return '<span class="sepv"></span>';
    if (t === 'v') return '<button class="btn drop" aria-label="Menu"></button>';
    const id = t.replace(/[*-]/, '');
    return `<button class="btn tb${t.endsWith('*') ? ' on' : ''}" aria-label="${id}"${t.endsWith('-') ? ' disabled' : ''}><svg viewBox="0 0 24 24">${combos[id] || u(id)}</svg></button>`;
  }).join('');
});
document.getElementById('algs').innerHTML = ['Recently used','Cartography','Database','File tools','Graphics','Interpolation','Layer tools','Network analysis','Raster analysis']
  .map((n, i) => `<li><i class="tw"></i><svg class="ic">${u(i ? 'q' : 'clk')}</svg>${n}</li>`).join('');

// Census tracts: blocks are split in two until they reach the local tract size
let seed = 7;
const rnd = () => (seed = (seed * 16807) % 2147483647) / 2147483647;
function cut(poly, px, py, nx, ny) {
  const a = [], b = [];
  poly.forEach((p, i) => {
    const q = poly[(i + 1) % poly.length];
    const d = (p[0]-px)*nx + (p[1]-py)*ny, e = (q[0]-px)*nx + (q[1]-py)*ny;
    (d >= 0 ? a : b).push(p);
    if (d * e < 0) { const t = d / (d - e), m = [p[0]+(q[0]-p[0])*t, p[1]+(q[1]-p[1])*t]; a.push(m); b.push(m); }
  });
  return [a, b];
}
function split(poly, size, tilt, out) {
  const xs = poly.map(p => p[0]), ys = poly.map(p => p[1]);
  const w = Math.max(...xs) - Math.min(...xs), h = Math.max(...ys) - Math.min(...ys);
  const cx = xs.reduce((s, v) => s + v) / xs.length, cy = ys.reduce((s, v) => s + v) / ys.length;
  if (Math.max(w, h) < size(cx, cy) * (.6 + rnd() * 1.3)) { out.push(poly); return; }
  const g = (w > h ? 0 : Math.PI / 2) + tilt(cx, cy) * (rnd() - .4);
  const k = .4 * (rnd() - .5);
  cut(poly, cx + w*k, cy + h*k, Math.cos(g), Math.sin(g)).forEach(p => p.length > 2 && split(p, size, tilt, out));
}
function tracts(clip, box, size, tilt, pink, sw) {
  const out = [], [x0, y0, x1, y1] = box, d = ['', ''];
  split([[x0,y0],[x1,y0],[x1,y1],[x0,y1]], size, tilt, out);
  out.forEach(p => {
    const wave = Math.sin(p[0][0] / 37) * Math.cos(p[0][1] / 29) * .15;
    d[rnd() < pink + wave ? 1 : 0] += 'M' + p.map(v => Math.round(v[0]) + ' ' + Math.round(v[1])).join('L') + 'Z';
  });
  return `<g clip-path="url(#${clip})" stroke-width="${sw}"><path fill="#ff0" d="${d[0]}"/><path fill="#e8718d" d="${d[1]}"/></g>`;
}
document.getElementById('tracts').innerHTML =
  tracts('city', [270, 590, 1190, 1260], (x, y) => {
    const r = Math.hypot(x - 625, (y - 865) * .9);
    const blot = Math.sin(x / 41 + y / 67) * Math.sin(y / 33 - x / 90);
    return (r < 60 ? 9 : r < 150 ? 15 : x > 850 ? 26 : y < 800 && x > 550 ? 32 : 20) * (1 + .4 * blot);
  }, (x, y) => x < 560 && y < 800 ? .12 : y > 1040 ? .15 : x > 850 ? .25 : .8, .2, 3.500) +
  tracts('clar', [280, 415, 590, 600], () => 30, () => .7, .38, 4) +
  tracts('palm', [665, 168, 910, 392], () => 27, () => .05, .22, 4);
</script>
</body>
</html>
